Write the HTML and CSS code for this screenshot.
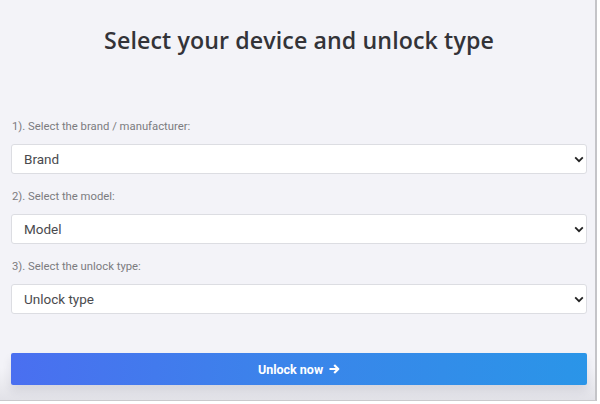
FILE: index.html
```html
<!DOCTYPE html>
<html>
<head>
<meta charset="utf-8">
<link rel="stylesheet" href="styles.css">
</head>
<body>
<div class="panel">
  <h1 class="title">Select your device and unlock type</h1>
  <form class="form">
    <label class="label">1). Select the brand / manufacturer:</label>
    <div class="select-wrap">
      <select class="select"><option>Brand</option></select>
      <svg class="chev" width="10" height="7" viewBox="0 0 10 7"><path d="M1.2 1.4 L5 5.2 L8.8 1.4" fill="none" stroke="#222" stroke-width="1.8"/></svg>
    </div>
    <label class="label">2). Select the model:</label>
    <div class="select-wrap">
      <select class="select"><option>Model</option></select>
      <svg class="chev" width="10" height="7" viewBox="0 0 10 7"><path d="M1.2 1.4 L5 5.2 L8.8 1.4" fill="none" stroke="#222" stroke-width="1.8"/></svg>
    </div>
    <label class="label">3). Select the unlock type:</label>
    <div class="select-wrap">
      <select class="select"><option>Unlock type</option></select>
      <svg class="chev" width="10" height="7" viewBox="0 0 10 7"><path d="M1.2 1.4 L5 5.2 L8.8 1.4" fill="none" stroke="#222" stroke-width="1.8"/></svg>
    </div>
    <button type="button" class="btn">Unlock now
      <svg class="arrow" width="11" height="10" viewBox="0 0 11 10"><path d="M0.5 5 H9 M5.2 1 L9.3 5 L5.2 9" fill="none" stroke="#fff" stroke-width="2.2" stroke-linejoin="round"/></svg>
    </button>
  </form>
</div>
</body>
</html>
```
FILE: styles.css
```css
html, body {
  margin: 0;
  padding: 0;
  background: #ffffff;
}
body {
  width: 600px;
  height: 404px;
  overflow: hidden;
}
.panel {
  box-sizing: border-box;
  width: 597px;
  height: 401px;
  background: linear-gradient(180deg, #f3f3f8 0%, #f3f3f8 92%, #e2e2e8 100%);
  border-right: 2px solid #c4c4c8;
  border-bottom: 1px solid #c9c9cc;
  padding: 24px 8px 0 11px;
  display: flex;
  flex-direction: column;
}
.title {
  margin: 0;
  font-family: "Open Sans", "Noto Sans", sans-serif;
  font-weight: 600;
  font-size: 23.2px;
  line-height: 32px;
  color: #333338;
  text-align: center;
  letter-spacing: 0.1px;
}
.form {
  display: flex;
  flex-direction: column;
  margin-top: 63px;
}
.label {
  font-family: Roboto, "Liberation Sans", sans-serif;
  font-size: 11.3px;
  line-height: 16px;
  color: #7b7b7f;
  margin: 0 0 9px 1px;
}
.select-wrap {
  position: relative;
  margin-bottom: 15px;
}
.select {
  appearance: none;
  -webkit-appearance: none;
  box-sizing: border-box;
  width: 100%;
  height: 30px;
  border: 1px solid #dcdde2;
  border-radius: 3px;
  background: #ffffff;
  padding: 0 12px;
  font-family: Roboto, "Liberation Sans", sans-serif;
  font-size: 13.5px;
  color: #4a4a4e;
  outline: none;
}
.chev {
  position: absolute;
  right: 3px;
  top: 12px;
  pointer-events: none;
}
.btn {
  margin-top: 24px;
  height: 32px;
  border: none;
  border-radius: 2px;
  background: linear-gradient(90deg, #4a6ff0 0%, #3a85ea 50%, #2a95e8 100%);
  color: #ffffff;
  font-family: Roboto, "Liberation Sans", sans-serif;
  font-weight: 700;
  font-size: 12.5px;
  display: flex;
  align-items: center;
  justify-content: center;
  gap: 6px;
  box-shadow: 0 6px 10px rgba(40, 40, 70, 0.10);
}
.arrow {
  display: block;
}
```
